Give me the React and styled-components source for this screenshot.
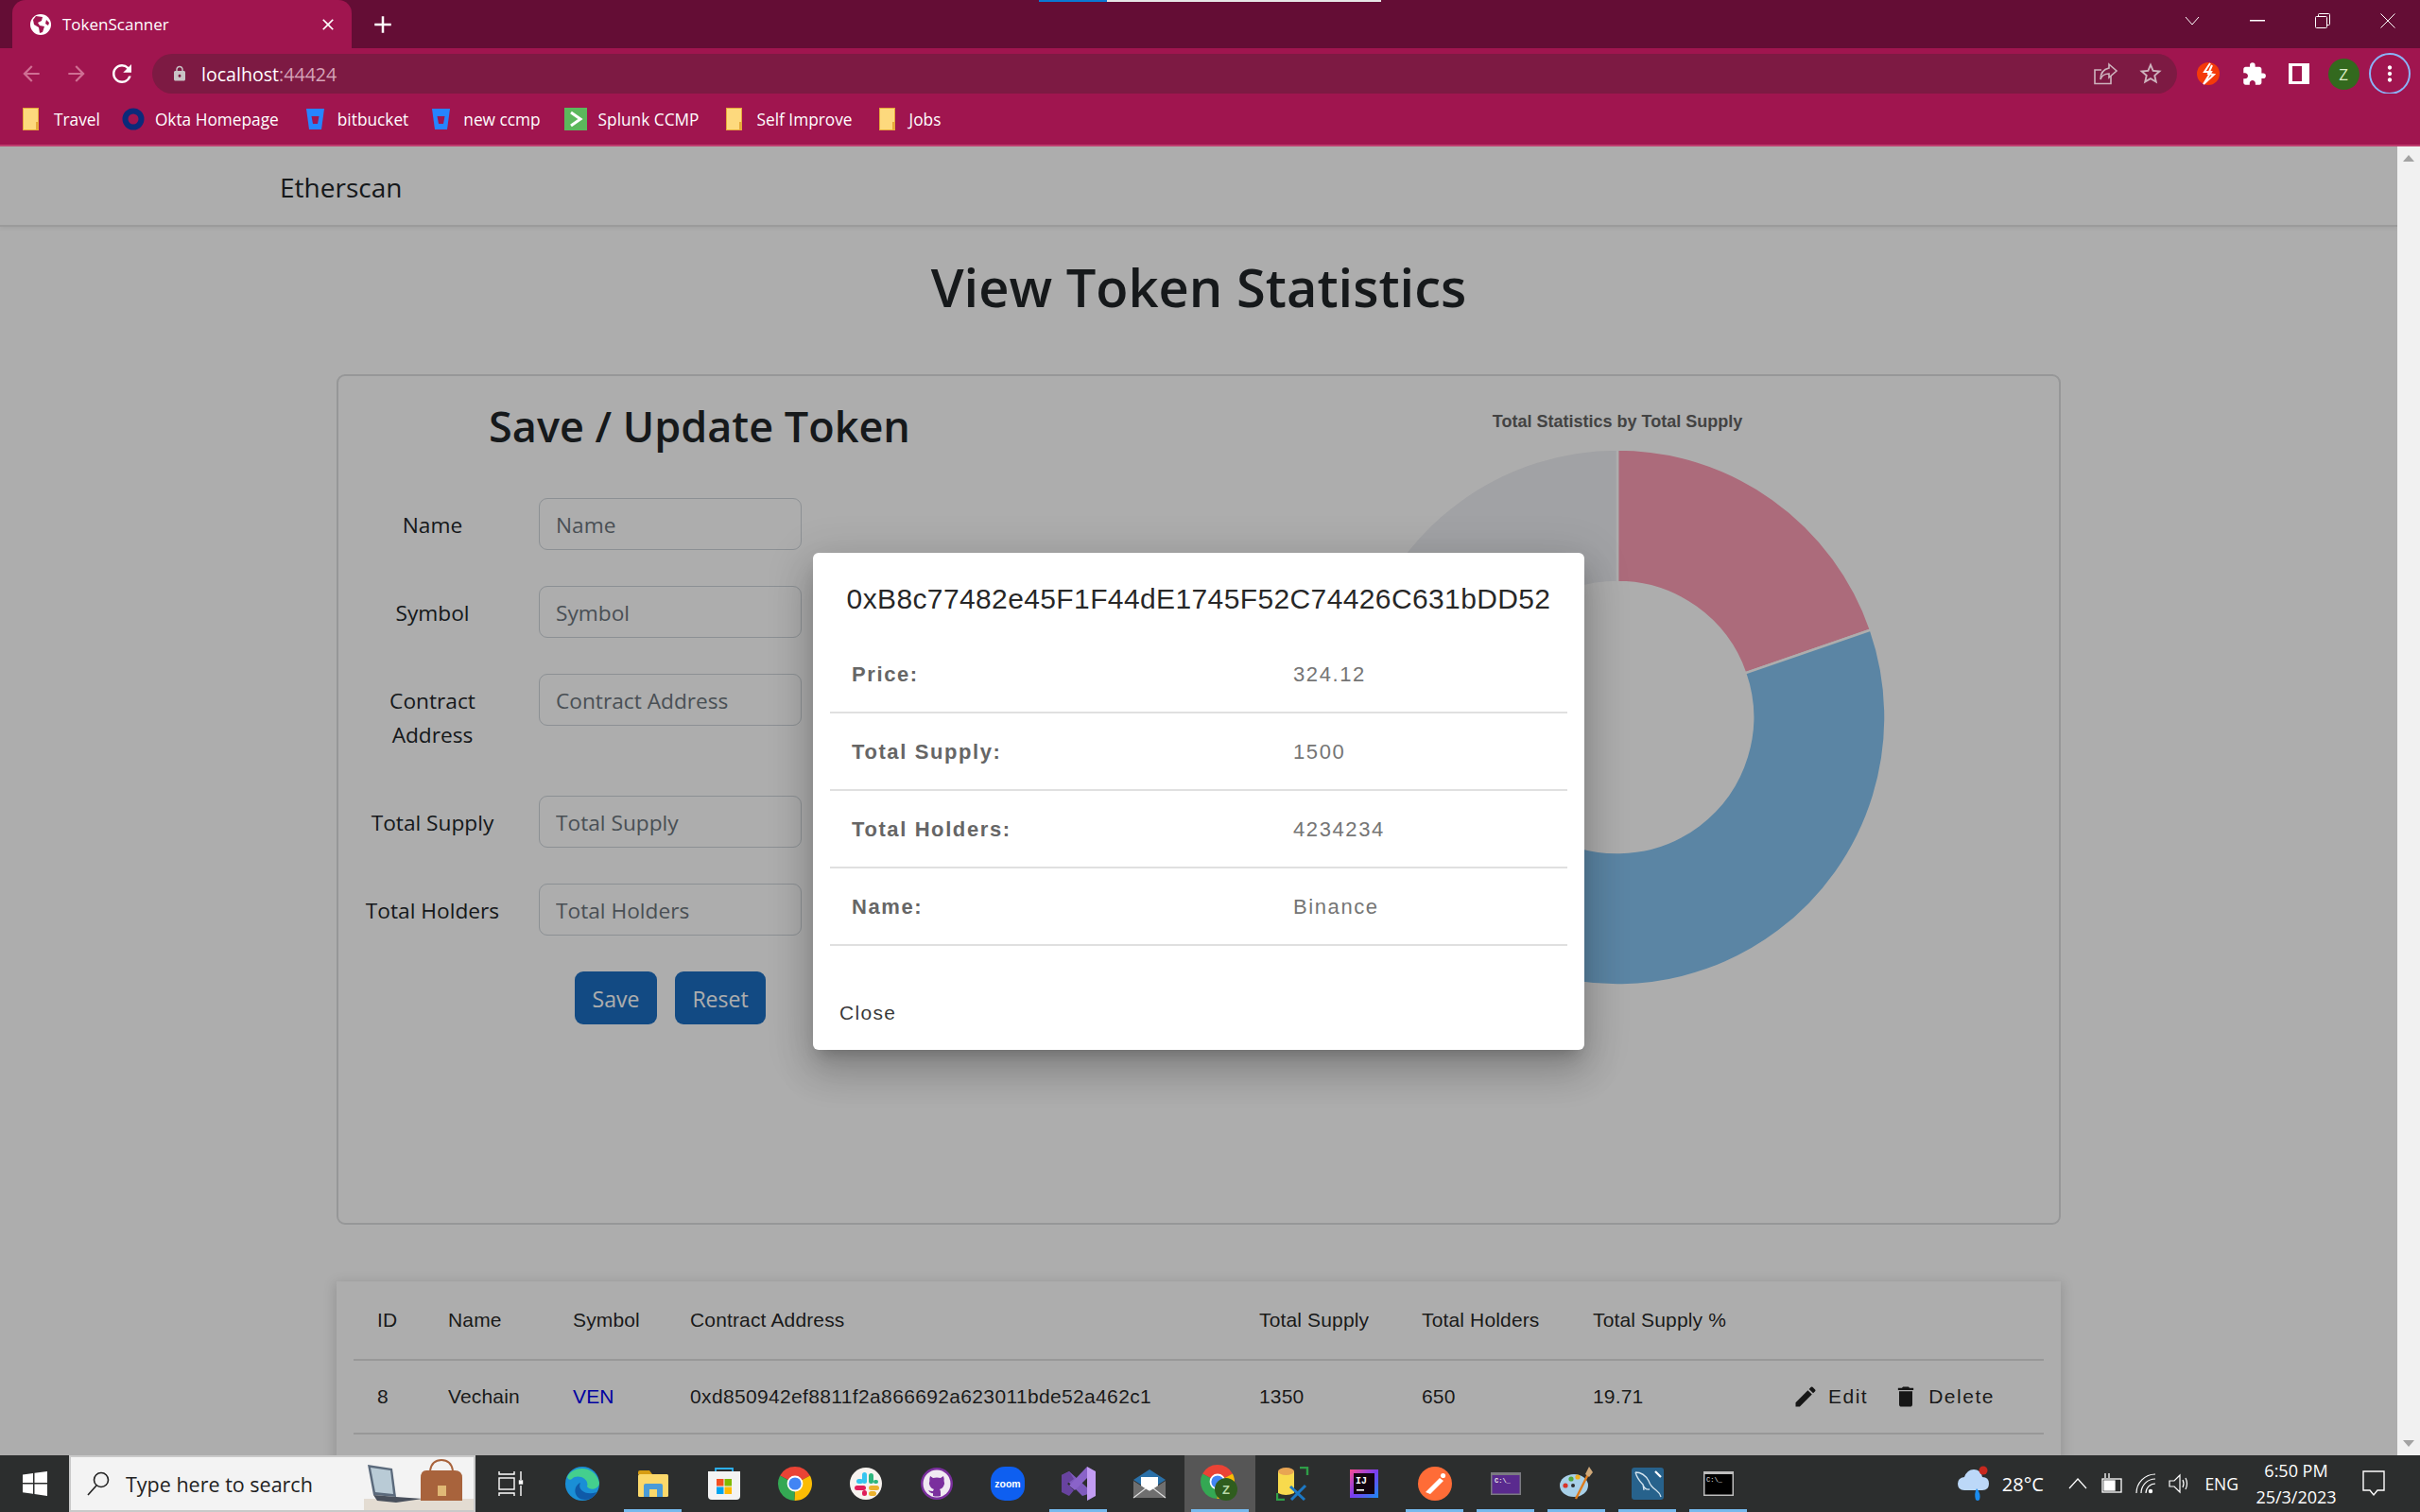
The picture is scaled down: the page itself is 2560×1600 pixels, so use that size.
import React from "react";
import styled, { createGlobalStyle } from "styled-components";
import {
  MdArrowBack,
  MdArrowForward,
  MdRefresh,
  MdLock,
  MdStarBorder,
  MdExtension,
  MdMoreVert,
  MdClose,
  MdAdd,
  MdEdit,
  MdDelete,
} from "react-icons/md";

const UI_FONT = `"Open Sans", "Noto Sans", sans-serif`;
const MAT_FONT = `"Liberation Sans", Arial, sans-serif`;

const GlobalStyle = createGlobalStyle`
  html, body {
    margin: 0;
    padding: 0;
    height: 100%;
    overflow: hidden;
    background: #fff;
    font-family: ${UI_FONT};
  }
  * { box-sizing: border-box; }
`;

// ring / pie sector, angles in degrees clockwise from north
const sector = (cx, cy, r, inner, from, to) => {
  const pt = (rad, a) => {
    const t = ((a - 90) * Math.PI) / 180;
    return `${(cx + rad * Math.cos(t)).toFixed(2)} ${(cy + rad * Math.sin(t)).toFixed(2)}`;
  };
  const large = to - from > 180 ? 1 : 0;
  if (inner === 0) {
    return `M${cx} ${cy} L${pt(r, from)} A${r} ${r} 0 ${large} 1 ${pt(r, to)} Z`;
  }
  return `M${pt(r, from)} A${r} ${r} 0 ${large} 1 ${pt(r, to)} L${pt(inner, to)} A${inner} ${inner} 0 ${large} 0 ${pt(inner, from)} Z`;
};

/* ---------- browser chrome ---------- */

const Shell = styled.div`
  width: 100%;
  height: 100vh;
  display: flex;
  flex-direction: column;
  overflow: hidden;
`;

const TabStrip = styled.div`
  position: relative;
  height: 51px;
  flex: none;
  background: #640d35;
  display: flex;
  align-items: flex-end;
  padding-left: 13px;
`;

const CaptureBar = styled.div`
  position: absolute;
  top: 0;
  left: 1099px;
  width: 362px;
  height: 2px;
  background: linear-gradient(to right, #0a78d4 72px, #e6e6e6 72px);
`;

const Tab = styled.div`
  width: 359px;
  height: 51px;
  background: #a0154f;
  border-radius: 14px 14px 0 0;
  display: flex;
  align-items: center;
  padding: 0 15px 0 19px;
  color: #fff;
  font-size: 17px;
`;

const TabTitle = styled.span`
  margin-left: 12px;
  flex: 1;
`;

const NewTab = styled.div`
  margin-left: 18px;
  height: 51px;
  display: flex;
  align-items: center;
  color: #fff;
`;

const WindowControls = styled.div`
  margin-left: auto;
  height: 51px;
  display: flex;
  align-items: center;
  color: #fff;
`;

const WinButton = styled.div`
  width: ${(p) => p.$w}px;
  height: 44px;
  display: flex;
  align-items: center;
  justify-content: center;
  margin-bottom: 7px;
`;

const Toolbar = styled.div`
  height: 48px;
  flex: none;
  background: #a0154f;
  display: flex;
  align-items: center;
  padding-top: 6px;
  padding-left: 3px;
`;

const NavButton = styled.div`
  width: ${(p) => p.$w || 48}px;
  display: flex;
  justify-content: center;
  color: ${(p) => (p.$off ? "#cf6f93" : "#fff")};
`;

const AddressBar = styled.div`
  width: 2142px;
  height: 42px;
  margin-left: 2px;
  background: #7d1a43;
  border-radius: 21px;
  display: flex;
  align-items: center;
  padding: 0 5px 0 20px;
  font-size: 19.6px;
`;

const Host = styled.span`
  margin-left: 14px;
  color: #fff;
`;

const Port = styled.span`
  color: #d6a4b8;
  flex: 1;
`;

const AddressIcon = styled.div`
  width: ${(p) => p.$w}px;
  display: flex;
  justify-content: center;
  color: #cdb3bd;
`;

const ExtensionTray = styled.div`
  display: flex;
  align-items: center;
  margin-left: 9px;
`;

const ExtSlot = styled.div`
  width: ${(p) => p.$w}px;
  display: flex;
  justify-content: center;
  color: #fff;
`;

const Avatar = styled.div`
  width: 33px;
  height: 33px;
  border-radius: 50%;
  background: #33691e;
  color: #dcedc8;
  font-size: 17px;
  display: flex;
  align-items: center;
  justify-content: center;
`;

const MenuRing = styled.div`
  width: 44px;
  height: 44px;
  border: 2px solid #8ab4f8;
  border-radius: 50%;
  display: flex;
  align-items: center;
  justify-content: center;
  color: #fff;
`;

const BookmarkBar = styled.div`
  height: 56px;
  flex: none;
  background: #a0154f;
  border-bottom: 2px solid #bf3f6f;
  display: flex;
  align-items: center;
  padding-left: 24px;
  color: #fff;
  font-size: 17.3px;
`;

const Bookmark = styled.div`
  display: flex;
  align-items: center;
  gap: ${(p) => p.$gap || 15}px;
  margin-right: ${(p) => p.$mr}px;
`;

/* ---------- page ---------- */

const Viewport = styled.div`
  flex: 1;
  min-height: 0;
  display: flex;
  position: relative;
`;

const Page = styled.div`
  flex: 1;
  min-width: 0;
  position: relative;
  overflow: hidden;
  background: #fff;
  color: #212529;
`;

const Navbar = styled.div`
  height: 85px;
  padding: 2px 0 0 296px;
  display: flex;
  align-items: center;
  border-bottom: 2px solid #e5e5e5;
  box-shadow: 0 1px 5px rgba(0, 0, 0, 0.08);
  font-size: 28px;
`;

const Heading = styled.h1`
  margin: 21px 0 43px;
  height: 92px;
  line-height: 84px;
  text-align: center;
  font-size: 56px;
  font-weight: 600;
`;

const Card = styled.div`
  width: 1824px;
  height: 900px;
  margin: 0 auto;
  border: 2px solid #dedfe0;
  border-radius: 9px;
  display: flex;
`;

const FormColumn = styled.div`
  width: 764px;
  flex: none;
`;

const FormTitle = styled.h2`
  margin: 0;
  padding-top: 21px;
  height: 129px;
  line-height: 64px;
  font-size: 45px;
  font-weight: 600;
  text-align: center;
`;

const FormRow = styled.div`
  display: grid;
  grid-template-columns: 199px 278px;
  column-gap: 13px;
  margin-bottom: 38px;
`;

const RowLabel = styled.label`
  text-align: center;
  font-size: 22.7px;
  line-height: 36px;
  padding: 11px 0 8px;
`;

const NarrowLabel = styled(RowLabel)`
  padding-left: 50px;
  padding-right: 50px;
`;

const TextInput = styled.input`
  width: 278px;
  height: 55px;
  padding: 2px 17px 0;
  border: 1.5px solid #ced4da;
  border-radius: 9px;
  background: #fff;
  font-family: ${UI_FONT};
  font-size: 22.7px;
  &::placeholder {
    color: #6c757d;
    opacity: 1;
  }
`;

const FormActions = styled.div`
  display: flex;
  gap: 19px;
  margin-left: 250px;
`;

const PrimaryButton = styled.button`
  height: 56px;
  width: ${(p) => p.$w}px;
  padding: 1px 0 0;
  border: none;
  border-radius: 9px;
  background: #1b6ec2;
  color: #fff;
  font-family: ${UI_FONT};
  font-size: 23px;
`;

const ChartColumn = styled.div`
  flex: 1;
  margin-left: 122px;
  display: flex;
  flex-direction: column;
  align-items: center;
`;

const ChartTitle = styled.div`
  margin-top: 37px;
  height: 22px;
  line-height: 22px;
  font-family: ${MAT_FONT};
  font-weight: 700;
  font-size: 18px;
  color: #646464;
`;

const DonutSvg = styled.svg`
  margin-top: 17px;
  display: block;
`;

const TableCard = styled.div`
  width: 1824px;
  margin: 60px auto 0;
  padding: 0 18px;
  background: #fff;
  box-shadow: 0 3px 12px 2px rgba(0, 0, 0, 0.14);
  font-family: ${MAT_FONT};
  font-size: 21px;
  letter-spacing: 0.15px;
  color: rgba(0, 0, 0, 0.87);
`;

const TableRow = styled.div`
  height: ${(p) => p.$h}px;
  padding-left: 25px;
  display: grid;
  grid-template-columns: 75px 132px 124px 602px 172px 181px 211px 1fr;
  align-items: center;
  border-bottom: 2px solid #e0e0e0;
`;

const SymbolLink = styled.span`
  color: #0000ee;
`;

const AddressCell = styled.span`
  letter-spacing: 0.35px;
`;

const ActionCell = styled.div`
  display: flex;
  align-items: center;
`;

const ActionButton = styled.span`
  display: flex;
  align-items: center;
  gap: 10px;
  margin-right: 26px;
  letter-spacing: 1.5px;
  color: rgba(0, 0, 0, 0.87);
`;

/* ---------- dialog ---------- */

const Backdrop = styled.div`
  position: absolute;
  inset: 0;
  background: rgba(0, 0, 0, 0.32);
  display: flex;
  align-items: center;
  justify-content: center;
`;

const Dialog = styled.div`
  width: 816px;
  height: 526px;
  padding: 0 18px;
  background: #fff;
  border-radius: 6px;
  box-shadow: 0 11px 15px -7px rgba(0, 0, 0, 0.2),
    0 24px 38px 3px rgba(0, 0, 0, 0.14), 0 9px 46px 8px rgba(0, 0, 0, 0.12);
  font-family: ${MAT_FONT};
`;

const DialogTitle = styled.h2`
  margin: 0;
  height: 88px;
  padding-top: 29px;
  line-height: 40px;
  text-align: center;
  font-size: 30px;
  font-weight: 400;
  letter-spacing: 0.38px;
  color: rgba(0, 0, 0, 0.87);
`;

const DetailRow = styled.div`
  height: 82px;
  padding: 3px 0 0 23px;
  display: grid;
  grid-template-columns: 467px 1fr;
  align-items: center;
  border-bottom: 2px solid #e0e0e0;
  font-size: 22px;
  letter-spacing: 1.6px;
  color: #757575;
`;

const DetailLabel = styled.span`
  font-weight: 700;
  color: #666;
`;

const CloseButton = styled.div`
  margin: 58px 0 0 10px;
  font-size: 21px;
  line-height: 26px;
  letter-spacing: 1.3px;
  color: rgba(0, 0, 0, 0.8);
`;

/* ---------- scrollbar ---------- */

const Scrollbar = styled.div`
  width: 24px;
  flex: none;
  background: #f1f1f1;
  display: flex;
  flex-direction: column;
  justify-content: space-between;
  align-items: center;
  padding: 9px 0;
`;

const ScrollArrow = styled.div`
  width: 0;
  height: 0;
  border-left: 6px solid transparent;
  border-right: 6px solid transparent;
  border-bottom: ${(p) => (p.$down ? "none" : "7px solid #a3a3a3")};
  border-top: ${(p) => (p.$down ? "7px solid #a3a3a3" : "none")};
`;

/* ---------- taskbar ---------- */

const Taskbar = styled.div`
  height: 60px;
  flex: none;
  background: #2c2e2e;
  display: flex;
  align-items: center;
  color: #fff;
`;

const StartButton = styled.div`
  width: 73px;
  height: 60px;
  display: flex;
  align-items: center;
  justify-content: center;
`;

const SearchBox = styled.div`
  position: relative;
  width: 430px;
  height: 60px;
  background: #f3f3f3;
  border: 2px solid #c9c9c9;
  display: flex;
  align-items: center;
  padding-left: 17px;
  color: #222;
  font-size: 21.5px;
  overflow: hidden;
`;

const SearchText = styled.span`
  margin-left: 17px;
`;

const SearchArt = styled.svg`
  position: absolute;
  right: 0;
  top: 0;
`;

const TaskItem = styled.div`
  width: 75px;
  height: 60px;
  flex: none;
  display: flex;
  align-items: center;
  justify-content: center;
  position: relative;
  background: ${(p) => (p.$active ? "#565656" : "transparent")};
  margin-right: ${(p) => (p.$sep ? 2 : 0)}px;
  &::after {
    content: "";
    display: ${(p) => (p.$open ? "block" : "none")};
    position: absolute;
    left: 7px;
    right: 7px;
    bottom: 0;
    height: 3px;
    background: #76b9ed;
  }
`;

const Tray = styled.div`
  margin-left: auto;
  padding-right: 37px;
  display: flex;
  align-items: center;
`;

const TraySlot = styled.div`
  margin-left: ${(p) => p.$ml}px;
  display: flex;
  align-items: center;
  justify-content: center;
  font-size: ${(p) => p.$fs || 18}px;
`;

const Clock = styled.div`
  margin-left: 13px;
  width: 96px;
  text-align: center;
  font-size: 18px;
  line-height: 28px;
`;

/* ---------- drawn icons ---------- */

const ChromeIcon = ({ size = 36 }) => (
  <svg width={size} height={size} viewBox="0 0 36 36">
    <path d={sector(18, 18, 18, 0, -62, 62)} fill="#ea4335" />
    <path d={sector(18, 18, 18, 0, 62, 182)} fill="#fbbc04" />
    <path d={sector(18, 18, 18, 0, 182, 298)} fill="#34a853" />
    <circle cx="18" cy="18" r="8.4" fill="#fff" />
    <circle cx="18" cy="18" r="6.6" fill="#4285f4" />
  </svg>
);

const GlobeFavicon = () => (
  <svg width="22" height="22" viewBox="0 0 22 22">
    <circle cx="11" cy="11" r="11" fill="#fff" />
    <path d="M6 2 L13 3 L12 7 L8 9 L10 12 L15 13 L13 19 L10 20 L9 14 L4 11 L3 6Z" fill="#a0154f" />
    <path d="M17 6 L20 9 L19 12 L16 10Z" fill="#a0154f" />
  </svg>
);

const FolderBookmark = () => (
  <svg width="17" height="24" viewBox="0 0 17 24">
    <rect x="0.5" y="0.5" width="16" height="23" fill="#fdd97d" stroke="#e6a93a" />
    <rect x="14" y="15" width="3" height="9" fill="#e6a93a" />
  </svg>
);

const BitbucketIcon = () => (
  <svg width="19" height="24" viewBox="0 0 19 24">
    <path d="M0 1 H19 L16 23 H3Z" fill="#2684ff" />
    <path d="M5.5 9 H13.5 L12 17 H7Z" fill="#a0154f" />
  </svg>
);

const TASK_ICONS = {
  taskview: (
    <svg width="28" height="28" viewBox="0 0 28 28" fill="none" stroke="#fff" strokeWidth="1.4">
      <path d="M1 1 V4 H17 V1" />
      <rect x="1" y="8" width="16" height="12" />
      <path d="M1 27 V24 H17 V27" />
      <path d="M24 1 V10 M24 16 V27" />
      <rect x="22.5" y="11" width="3" height="3" fill="#fff" />
    </svg>
  ),
  edge: (
    <svg width="38" height="38" viewBox="0 0 38 38">
      <circle cx="19" cy="19" r="18" fill="#1a8fd6" />
      <path d="M3 12 C8 0 32 -2 37 18 C37 25 27 27 24 22 C27 14 14 8 8 14 C5 16 4 14 3 12Z" fill="#44cf8e" />
      <path d="M22 36 C10 36 8 22 17 18 C13 26 24 32 34 28 C32 33 27 36 22 36Z" fill="#0f5aa8" />
    </svg>
  ),
  explorer: (
    <svg width="34" height="30" viewBox="0 0 34 30">
      <path d="M1 3 Q1 1 3 1 H13 L16 5 H1Z" fill="#d79c12" />
      <rect x="1" y="5" width="32" height="24" rx="1.5" fill="#fbd86b" />
      <path d="M7 29 V17 Q7 15 9 15 H25 Q27 15 27 17 V29 H21 V21 H13 V29Z" fill="#4a9bd8" />
    </svg>
  ),
  store: (
    <svg width="36" height="36" viewBox="0 0 36 36">
      <path d="M9 6 V2 H27 V6" fill="none" stroke="#2cb0ef" strokeWidth="1.8" />
      <path d="M1 5 H35 V31 Q35 35 31 35 H5 Q1 35 1 31Z" fill="#f3f3f3" />
      <rect x="10" y="13" width="7.5" height="7.5" fill="#f25022" />
      <rect x="18.5" y="13" width="7.5" height="7.5" fill="#7fba00" />
      <rect x="10" y="21.5" width="7.5" height="7.5" fill="#00a4ef" />
      <rect x="18.5" y="21.5" width="7.5" height="7.5" fill="#ffb900" />
    </svg>
  ),
  chrome: <ChromeIcon />,
  slack: (
    <svg width="34" height="34" viewBox="0 0 34 34">
      <circle cx="17" cy="17" r="17" fill="#f7f3ef" />
      <rect x="13" y="5" width="5" height="12" rx="2.5" fill="#36c5f0" />
      <rect x="7" y="12" width="7" height="5" rx="2.5" fill="#36c5f0" />
      <rect x="20" y="6" width="5" height="11" rx="2.5" fill="#2eb67d" />
      <rect x="25" y="13" width="5" height="4" rx="2" fill="#2eb67d" />
      <rect x="5" y="19" width="12" height="5" rx="2.5" fill="#e01e5a" />
      <rect x="13" y="24" width="5" height="6" rx="2.5" fill="#e01e5a" />
      <rect x="20" y="19" width="11" height="5" rx="2.5" fill="#ecb22e" />
      <rect x="20" y="25" width="8" height="5" rx="2.5" fill="#ecb22e" />
    </svg>
  ),
  github: (
    <svg width="34" height="34" viewBox="0 0 34 34">
      <circle cx="17" cy="17" r="17" fill="#7b2f9e" />
      <circle cx="17" cy="17" r="14.5" fill="#f0e9f2" />
      <path d="M10 9 L13 11 Q17 10 21 11 L24 9 Q25 12 24.6 14 Q26 17 24 20 Q22 23 20 23 Q21 24 21 26 V30 Q17 31 13 30 V27 Q10 28 8 24 Q10 25 13 25 Q13 24 14 23 Q12 23 10 20 Q8 17 9.4 14 Q9 12 10 9Z" fill="#7b2f9e" />
    </svg>
  ),
  zoom: (
    <svg width="36" height="36" viewBox="0 0 36 36">
      <rect width="36" height="36" rx="15" fill="#0e5ff0" />
      <text x="18" y="21.5" textAnchor="middle" fontFamily="Liberation Sans, sans-serif" fontSize="10.5" fontWeight="700" fill="#fff">zoom</text>
    </svg>
  ),
  vs: (
    <svg width="36" height="36" viewBox="0 0 36 36">
      <path d="M0 9 L8 5 L28 23 V29 L22 31Z" fill="#7f5bbd" />
      <path d="M0 9 V27 L8 31 L13 25 L6 18 L13 13 L8 5Z" fill="#68439f" />
      <path d="M27 0 L36 5 V31 L27 36 L27 28 V8Z" fill="#c29cf2" />
      <path d="M27 0 L8 20 L14 25 L27 12Z" fill="#8a63c9" />
    </svg>
  ),
  mail: (
    <svg width="36" height="32" viewBox="0 0 36 32">
      <path d="M18 1 L35 12 L18 23 L1 12Z" fill="#2a70a8" />
      <path d="M9 9 H27 V20 L18 24 L9 20Z" fill="#fff" />
      <path d="M1 13 L18 24 L35 13 V31 H1Z" fill="#6f6f6f" />
      <path d="M1 31 L14 21 M35 31 L22 21" stroke="#ddd" strokeWidth="1.2" />
    </svg>
  ),
  chromeProfile: (
    <svg width="42" height="40" viewBox="0 0 42 40">
      <path d={sector(18, 18, 18, 0, -62, 62)} fill="#ea4335" />
      <path d={sector(18, 18, 18, 0, 62, 182)} fill="#fbbc04" />
      <path d={sector(18, 18, 18, 0, 182, 298)} fill="#34a853" />
      <circle cx="18" cy="18" r="8.4" fill="#fff" />
      <circle cx="18" cy="18" r="6.6" fill="#4285f4" />
      <circle cx="27" cy="26" r="12" fill="#2f5d1e" />
      <text x="27" y="31" textAnchor="middle" fontFamily="Liberation Sans, sans-serif" fontSize="13" fontWeight="700" fill="#b8d8a8">Z</text>
    </svg>
  ),
  dbTools: (
    <svg width="36" height="36" viewBox="0 0 36 36">
      <path d="M25 1 H33 V9 M1 36 V28 M1 35 H9" fill="none" stroke="#2e9e47" strokeWidth="2.4" />
      <path d="M2 5 Q10 0 19 5 V28 Q10 32 2 28Z" fill="#f8da4d" />
      <ellipse cx="10.5" cy="5" rx="8.5" ry="4" fill="#e8a553" />
      <path d="M15 21 L30 35 M31 20 L16 35" stroke="#1c78c4" strokeWidth="3" />
    </svg>
  ),
  intellij: (
    <svg width="30" height="30" viewBox="0 0 30 30">
      <defs>
        <linearGradient id="ijGrad" x1="0" y1="0" x2="1" y2="1">
          <stop offset="0" stopColor="#fc4d8e" />
          <stop offset="0.5" stopColor="#7a3df0" />
          <stop offset="1" stopColor="#1a8cf0" />
        </linearGradient>
      </defs>
      <rect width="30" height="30" fill="url(#ijGrad)" />
      <rect x="4" y="4" width="22" height="22" fill="#12030f" />
      <text x="6" y="15" fontFamily="Liberation Mono, monospace" fontSize="10" fontWeight="700" fill="#fff">IJ</text>
      <rect x="7" y="21" width="8" height="1.6" fill="#fff" />
    </svg>
  ),
  postman: (
    <svg width="36" height="36" viewBox="0 0 36 36">
      <circle cx="18" cy="18" r="18" fill="#ff6c37" />
      <path d="M8 27 L23 12 L27 15 L13 29Z" fill="#fff" />
      <circle cx="26.5" cy="9.5" r="2.6" fill="#fff" />
    </svg>
  ),
  cmdPurple: (
    <svg width="32" height="24" viewBox="0 0 32 24">
      <rect width="32" height="24" fill="#7a7a80" />
      <rect x="1.5" y="3" width="29" height="19.5" fill="#5a2a8e" />
      <text x="4" y="11" fontFamily="Liberation Mono, monospace" fontSize="7" fontWeight="700" fill="#e8e8e8">C:\_</text>
    </svg>
  ),
  paint: (
    <svg width="36" height="36" viewBox="0 0 36 36">
      <ellipse cx="15" cy="20" rx="15" ry="12" fill="#a8d0e8" />
      <circle cx="6" cy="20" r="2.6" fill="#d8352a" />
      <circle cx="12" cy="13" r="2.6" fill="#52a83a" />
      <circle cx="19" cy="11" r="2.6" fill="#f0b020" />
      <circle cx="14" cy="20" r="2" fill="#2c2e2e" />
      <path d="M17 34 L30 8" stroke="#dd7a1c" strokeWidth="2.4" />
      <path d="M27 8 L31 0 L35 6 L31 11Z" fill="#cfa878" />
    </svg>
  ),
  mysql: (
    <svg width="34" height="34" viewBox="0 0 34 34">
      <rect width="34" height="34" rx="3" fill="#27628c" />
      <path d="M4 5 Q13 5 18 14 Q20 20 26 24 Q30 27 31 31 M4 5 Q6 12 12 18 L13 24 M12 18 Q14 24 19 23" fill="none" stroke="#d4e4ee" strokeWidth="1.3" />
      <path d="M25 4 L31 10" stroke="#fff" strokeWidth="2.2" />
    </svg>
  ),
  cmd: (
    <svg width="32" height="26" viewBox="0 0 32 26">
      <rect width="32" height="26" fill="#bdbdbd" />
      <rect x="1.5" y="3" width="29" height="21.5" fill="#000" />
      <text x="3" y="11" fontFamily="Liberation Mono, monospace" fontSize="7" fill="#e8e8e8">C:\_</text>
    </svg>
  ),
};

const TASK_ITEMS = [
  { icon: "taskview" },
  { icon: "edge" },
  { icon: "explorer", open: true },
  { icon: "store" },
  { icon: "chrome" },
  { icon: "slack" },
  { icon: "github" },
  { icon: "zoom" },
  { icon: "vs", open: true },
  { icon: "mail" },
  { icon: "chromeProfile", open: true, active: true, sep: true },
  { icon: "dbTools" },
  { icon: "intellij" },
  { icon: "postman", open: true },
  { icon: "cmdPurple", open: true },
  { icon: "paint", open: true },
  { icon: "mysql", open: true },
  { icon: "cmd", open: true },
];

const FORM_FIELDS = [
  { label: "Name" },
  { label: "Symbol" },
  { label: "Contract Address", narrow: true },
  { label: "Total Supply" },
  { label: "Total Holders" },
];

const DETAILS = [
  ["Price:", "324.12"],
  ["Total Supply:", "1500"],
  ["Total Holders:", "4234234"],
  ["Name:", "Binance"],
];

const COLUMNS = [
  "ID",
  "Name",
  "Symbol",
  "Contract Address",
  "Total Supply",
  "Total Holders",
  "Total Supply %",
];

const App = () => {
  return (
    <>
      <GlobalStyle />
      <Shell>
        <TabStrip>
          <CaptureBar />
          <Tab>
            <GlobeFavicon />
            <TabTitle>TokenScanner</TabTitle>
            <MdClose size={20} />
          </Tab>
          <NewTab>
            <MdAdd size={30} />
          </NewTab>
          <WindowControls>
            <WinButton $w={69}>
              <svg width="16" height="10" viewBox="0 0 16 10" fill="none" stroke="#fff" strokeWidth="1">
                <path d="M1 1 L8 9 L15 1" />
              </svg>
            </WinButton>
            <WinButton $w={69}>
              <svg width="16" height="2" viewBox="0 0 16 2">
                <rect width="16" height="1.5" fill="#fff" />
              </svg>
            </WinButton>
            <WinButton $w={69}>
              <svg width="16" height="16" viewBox="0 0 16 16" fill="none" stroke="#fff" strokeWidth="1">
                <rect x="0.5" y="3.5" width="12" height="12" rx="1" />
                <path d="M3.5 3 V1.5 Q3.5 0.5 4.5 0.5 H14.5 Q15.5 0.5 15.5 1.5 V11.5 Q15.5 12.5 14.5 12.5 H13" />
              </svg>
            </WinButton>
            <WinButton $w={69}>
              <svg width="16" height="16" viewBox="0 0 16 16" fill="none" stroke="#fff" strokeWidth="1">
                <path d="M0.5 0.5 L15.5 15.5 M15.5 0.5 L0.5 15.5" />
              </svg>
            </WinButton>
          </WindowControls>
        </TabStrip>

        <Toolbar>
          <NavButton $off $w={60}>
            <MdArrowBack size={26} />
          </NavButton>
          <NavButton $off $w={36}>
            <MdArrowForward size={26} />
          </NavButton>
          <NavButton $w={60}>
            <MdRefresh size={30} />
          </NavButton>
          <AddressBar>
            <MdLock size={18} color="#c9c4c6" />
            <Host>localhost</Host>
            <Port>:44424</Port>
            <AddressIcon $w={48}>
              <svg width="26" height="24" viewBox="0 0 26 24" fill="none" stroke="#cdb3bd" strokeWidth="1.6">
                <path d="M18 14 V22.5 H1 V8 H8" />
                <path d="M16 2 L24 9 L16 16 V12 Q9 12 7 18 Q7 8 16 6Z" />
              </svg>
            </AddressIcon>
            <AddressIcon $w={46}>
              <MdStarBorder size={28} />
            </AddressIcon>
          </AddressBar>
          <ExtensionTray>
            <ExtSlot $w={48}>
              <svg width="24" height="24" viewBox="0 0 24 24">
                <circle cx="12" cy="12" r="12" fill="#f43a0a" />
                <path d="M14 1 L8 10 L15 10 L7 23 L18 13 L12 12 L16 3" fill="none" stroke="#fff" strokeWidth="2" />
              </svg>
            </ExtSlot>
            <ExtSlot $w={48}>
              <MdExtension size={27} />
            </ExtSlot>
            <ExtSlot $w={47}>
              <svg width="22" height="22" viewBox="0 0 22 22">
                <path d="M0 0 H22 V22 H0Z M4 3 V19 H14 V3Z" fill="#fff" fillRule="evenodd" />
              </svg>
            </ExtSlot>
            <ExtSlot $w={48}>
              <Avatar>Z</Avatar>
            </ExtSlot>
            <ExtSlot $w={50}>
              <MenuRing>
                <MdMoreVert size={26} />
              </MenuRing>
            </ExtSlot>
          </ExtensionTray>
        </Toolbar>

        <BookmarkBar>
          <Bookmark $mr={23} $gap={16}>
            <FolderBookmark />
            Travel
          </Bookmark>
          <Bookmark $mr={29} $gap={11}>
            <svg width="24" height="24" viewBox="0 0 24 24">
              <circle cx="12" cy="12" r="8.5" fill="none" stroke="#0b2a7a" strokeWidth="6" />
            </svg>
            Okta Homepage
          </Bookmark>
          <Bookmark $mr={25} $gap={14}>
            <BitbucketIcon />
            bitbucket
          </Bookmark>
          <Bookmark $mr={25} $gap={14}>
            <BitbucketIcon />
            new ccmp
          </Bookmark>
          <Bookmark $mr={29} $gap={12}>
            <svg width="24" height="24" viewBox="0 0 24 24">
              <rect width="24" height="24" fill="#5cb85c" />
              <path d="M7 5 L17 12 L7 19" fill="none" stroke="#fff" strokeWidth="3" />
            </svg>
            Splunk CCMP
          </Bookmark>
          <Bookmark $mr={28}>
            <FolderBookmark />
            Self Improve
          </Bookmark>
          <Bookmark $mr={0}>
            <FolderBookmark />
            Jobs
          </Bookmark>
        </BookmarkBar>

        <Viewport>
          <Page>
            <Navbar>Etherscan</Navbar>
            <Heading>View Token Statistics</Heading>
            <Card>
              <FormColumn>
                <FormTitle>Save / Update Token</FormTitle>
                {FORM_FIELDS.map((f) => {
                  const Label = f.narrow ? NarrowLabel : RowLabel;
                  return (
                    <FormRow key={f.label}>
                      <Label>{f.label}</Label>
                      <TextInput placeholder={f.label} readOnly />
                    </FormRow>
                  );
                })}
                <FormActions>
                  <PrimaryButton $w={87}>Save</PrimaryButton>
                  <PrimaryButton $w={96}>Reset</PrimaryButton>
                </FormActions>
              </FormColumn>
              <ChartColumn>
                <ChartTitle>Total Statistics by Total Supply</ChartTitle>
                <DonutSvg width="570" height="570" viewBox="0 0 570 570">
                  <g stroke="#fff" strokeWidth="2.5">
                    <path d={sector(285, 285, 283.5, 143, 0, 70.96)} fill="#fe9eb5" />
                    <path d={sector(285, 285, 283.5, 143, 70.96, 215)} fill="#86c5f2" />
                    <path d={sector(285, 285, 283.5, 143, 215, 360)} fill="#eeeff3" />
                  </g>
                </DonutSvg>
              </ChartColumn>
            </Card>
            <TableCard>
              <TableRow $h={84}>
                {COLUMNS.map((c) => (
                  <span key={c}>{c}</span>
                ))}
                <span />
              </TableRow>
              <TableRow $h={78}>
                <span>8</span>
                <span>Vechain</span>
                <SymbolLink>VEN</SymbolLink>
                <AddressCell>0xd850942ef8811f2a866692a623011bde52a462c1</AddressCell>
                <span>1350</span>
                <span>650</span>
                <span>19.71</span>
                <ActionCell>
                  <ActionButton>
                    <MdEdit size={28} />
                    Edit
                  </ActionButton>
                  <ActionButton>
                    <MdDelete size={28} />
                    Delete
                  </ActionButton>
                </ActionCell>
              </TableRow>
              <TableRow $h={78} />
            </TableCard>
            <Backdrop>
              <Dialog>
                <DialogTitle>0xB8c77482e45F1F44dE1745F52C74426C631bDD52</DialogTitle>
                {DETAILS.map(([k, v]) => (
                  <DetailRow key={k}>
                    <DetailLabel>{k}</DetailLabel>
                    <span>{v}</span>
                  </DetailRow>
                ))}
                <CloseButton>Close</CloseButton>
              </Dialog>
            </Backdrop>
          </Page>
          <Scrollbar>
            <ScrollArrow />
            <ScrollArrow $down />
          </Scrollbar>
        </Viewport>

        <Taskbar>
          <StartButton>
            <svg width="26" height="26" viewBox="0 0 26 26" fill="#fff">
              <path d="M0 3.6 L11 2 V12 H0Z M12.5 1.8 L26 0 V12 H12.5Z M0 13.5 H11 V23.8 L0 22.2Z M12.5 13.5 H26 V26 L12.5 24Z" />
            </svg>
          </StartButton>
          <SearchBox>
            <svg width="24" height="26" viewBox="0 0 24 26" fill="none" stroke="#222" strokeWidth="1.6">
              <circle cx="15" cy="9" r="7.5" />
              <path d="M10 15 L1 25" />
            </svg>
            <SearchText>Type here to search</SearchText>
            <SearchArt width="116" height="56" viewBox="0 0 116 56">
              <rect x="0" y="44" width="116" height="12" fill="#e3dcd2" />
              <path d="M4 8 L30 12 L34 42 L10 40Z" fill="#5b6a7c" />
              <path d="M7 11 L28 14 L31 39 L12 37Z" fill="#b9cbd6" />
              <path d="M10 40 L34 42 L62 44 L34 48 L14 46Z" fill="#49505c" />
              <path d="M60 22 Q60 14 66 14 H96 Q104 14 104 22 V46 H60Z" fill="#a8633c" />
              <path d="M70 14 Q72 3 82 3 Q92 3 94 14" fill="none" stroke="#a8633c" strokeWidth="2" />
              <rect x="78" y="30" width="9" height="11" fill="#e0b875" />
            </SearchArt>
          </SearchBox>
          {TASK_ITEMS.map((t) => (
            <TaskItem key={t.icon} $open={t.open} $active={t.active} $sep={t.sep}>
              {TASK_ICONS[t.icon]}
            </TaskItem>
          ))}
          <Tray>
            <TraySlot $ml={0}>
              <svg width="34" height="38" viewBox="0 0 34 38">
                <path d="M7 26 Q0 26 0 19 Q0 13 7 12 Q10 4 17 4 Q24 4 26 12 Q33 12 33 19 Q33 26 26 26Z" fill="#bcd8f8" />
                <path d="M20 24 Q25 30 23 36 Q21 38 19 36 Q17 30 20 24Z" fill="#1a8cf0" />
                <circle cx="27" cy="5" r="4.5" fill="#c8281e" />
              </svg>
            </TraySlot>
            <TraySlot $ml={13} $fs={20}>28°C</TraySlot>
            <TraySlot $ml={26}>
              <svg width="20" height="12" viewBox="0 0 20 12" fill="none" stroke="#fff" strokeWidth="1.2">
                <path d="M1 11 L10 1 L19 11" />
              </svg>
            </TraySlot>
            <TraySlot $ml={14}>
              <svg width="24" height="24" viewBox="0 0 24 24" fill="none" stroke="#fff" strokeWidth="1.3">
                <rect x="2" y="7" width="20" height="14" />
                <rect x="4" y="9" width="11" height="10" fill="#fff" />
                <path d="M5 1 V6 M9 1 V6" />
              </svg>
            </TraySlot>
            <TraySlot $ml={12.5}>
              <svg width="24" height="24" viewBox="0 0 24 24" fill="none" stroke="#fff" strokeWidth="1.2">
                <path d="M2 22 A20 20 0 0 1 22 2 M7 22 A15 15 0 0 1 22 7 M12 22 A10 10 0 0 1 22 12" />
                <circle cx="17" cy="20" r="1.6" fill="#fff" />
              </svg>
            </TraySlot>
            <TraySlot $ml={11}>
              <svg width="24" height="24" viewBox="0 0 24 24" fill="none" stroke="#fff" strokeWidth="1.2">
                <path d="M2 9 H7 L13 3 V21 L7 15 H2Z" />
                <path d="M16 8 Q18 12 16 16 M19 6 Q22 12 19 18" />
              </svg>
            </TraySlot>
            <TraySlot $ml={15} $fs={17.5}>ENG</TraySlot>
            <Clock>
              6:50 PM
              <br />
              25/3/2023
            </Clock>
            <TraySlot $ml={22}>
              <svg width="24" height="28" viewBox="0 0 24 28" fill="none" stroke="#fff" strokeWidth="1.4">
                <path d="M1 1 H23 V21 H16 L12 26 L8 21 H1Z" />
              </svg>
            </TraySlot>
          </Tray>
        </Taskbar>
      </Shell>
    </>
  );
};

export default App;
